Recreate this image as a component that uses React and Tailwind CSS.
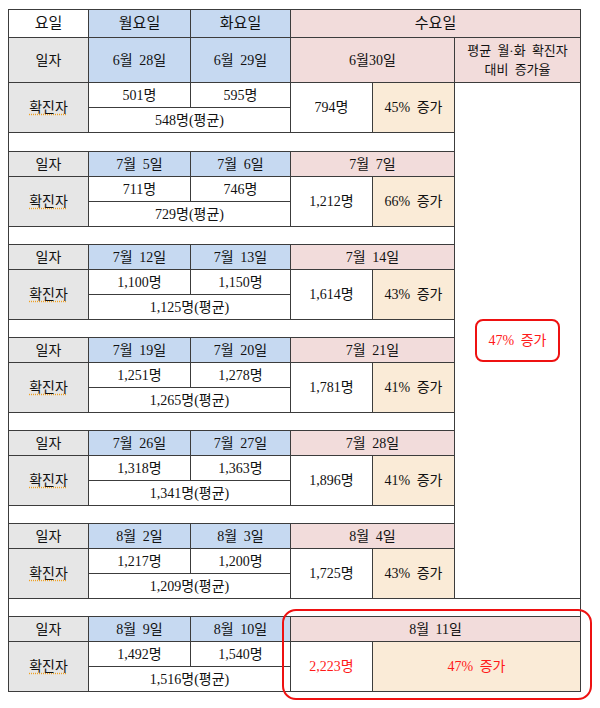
import React from 'react';

const blocks = [
  { d: ['7월 5일', '7월 6일', '7월 7일'], v: ['711명', '746명', '1,212명'], avg: '729명(평균)', pct: '66% 증가' },
  { d: ['7월 12일', '7월 13일', '7월 14일'], v: ['1,100명', '1,150명', '1,614명'], avg: '1,125명(평균)', pct: '43% 증가' },
  { d: ['7월 19일', '7월 20일', '7월 21일'], v: ['1,251명', '1,278명', '1,781명'], avg: '1,265명(평균)', pct: '41% 증가' },
  { d: ['7월 26일', '7월 27일', '7월 28일'], v: ['1,318명', '1,363명', '1,896명'], avg: '1,341명(평균)', pct: '41% 증가' },
  { d: ['8월 2일', '8월 3일', '8월 4일'], v: ['1,217명', '1,200명', '1,725명'], avg: '1,209명(평균)', pct: '43% 증가' },
];

const cell = 'border border-[#3c3c3c] p-0 text-center align-middle';
const grey = 'bg-[#e6e6e6]';
const blue = 'bg-[#c6d9f1]';
const pink = 'bg-[#f2dcdb]';
const beige = 'bg-[#faebd7]';
const date = '[word-spacing:3px]';

const Confirmed = () => (
  <span className="underline decoration-dotted decoration-[#f0a020] underline-offset-2">확진자</span>
);

const Block = ({ b, last }) => (
  <>
    <tr className="h-[25px]">
      <td className={`${cell} ${grey}`}>일자</td>
      <td className={`${cell} ${blue} ${date}`}>{b.d[0]}</td>
      <td className={`${cell} ${blue} ${date}`}>{b.d[1]}</td>
      <td className={`${cell} ${pink} ${date}`} colSpan={2}>{b.d[2]}</td>
    </tr>
    <tr className="h-[25px]">
      <td className={`${cell} ${grey}`} rowSpan={2}><Confirmed /></td>
      <td className={cell}>{b.v[0]}</td>
      <td className={cell}>{b.v[1]}</td>
      <td className={`${cell} bg-white`} rowSpan={2}>{b.v[2]}</td>
      <td className={`${cell} ${beige} ${date}`} rowSpan={2}>{b.pct}</td>
    </tr>
    <tr className="h-[25px]">
      <td className={cell} colSpan={2}>{b.avg}</td>
    </tr>
    <tr className="h-[18px]">
      <td className={cell} colSpan={last ? 6 : 5}></td>
    </tr>
  </>
);

export default function App() {
  return (
    <div className="relative w-[600px] h-[708px] bg-white pl-2 pt-[9px] text-[14px] text-[#111]" style={{ fontFamily: "'Liberation Serif', 'Noto Sans CJK KR', serif" }}>
      <table className="table-fixed border-collapse w-[572px]">
        <colgroup>
          <col className="w-[80px]" />
          <col className="w-[102px]" />
          <col className="w-[100px]" />
          <col className="w-[82px]" />
          <col className="w-[82px]" />
          <col className="w-[126px]" />
        </colgroup>
        <tbody>
          <tr className="h-[28px] text-[15px]">
            <td className={`${cell} bg-white`}>요일</td>
            <td className={`${cell} ${blue}`}>월요일</td>
            <td className={`${cell} ${blue}`}>화요일</td>
            <td className={`${cell} ${pink}`} colSpan={3}>수요일</td>
          </tr>
          <tr className="h-[45px]">
            <td className={`${cell} ${grey}`}>일자</td>
            <td className={`${cell} ${blue} ${date}`}>6월 28일</td>
            <td className={`${cell} ${blue} ${date}`}>6월 29일</td>
            <td className={`${cell} ${pink}`} colSpan={2}>6월30일</td>
            <td className={`${cell} ${pink} text-[13px] leading-[19px] ${date}`}>평균 월·화 확진자<br />대비 증가율</td>
          </tr>
          <tr className="h-[25px]">
            <td className={`${cell} ${grey}`} rowSpan={2}><Confirmed /></td>
            <td className={cell}>501명</td>
            <td className={cell}>595명</td>
            <td className={cell} rowSpan={2}>794명</td>
            <td className={`${cell} ${beige} ${date}`} rowSpan={2}>45% 증가</td>
            <td className={`${cell} bg-white`} rowSpan={22}>
              <span className={`inline-block border-2 border-[#ee1111] rounded-lg px-3 py-[9px] text-[#ff1a1a] ${date}`}>47% 증가</span>
            </td>
          </tr>
          <tr className="h-[25px]">
            <td className={cell} colSpan={2}>548명(평균)</td>
          </tr>
          <tr className="h-[19px]">
            <td className={cell} colSpan={5}></td>
          </tr>
          {blocks.map((b, i) => (
            <Block key={i} b={b} last={i === blocks.length - 1} />
          ))}
          <tr className="h-[25px]">
            <td className={`${cell} ${grey}`}>일자</td>
            <td className={`${cell} ${blue} ${date}`}>8월 9일</td>
            <td className={`${cell} ${blue} ${date}`}>8월 10일</td>
            <td className={`${cell} ${pink} ${date}`} colSpan={3}>8월 11일</td>
          </tr>
          <tr className="h-[25px]">
            <td className={`${cell} ${grey}`} rowSpan={2}><Confirmed /></td>
            <td className={cell}>1,492명</td>
            <td className={cell}>1,540명</td>
            <td className={`${cell} text-[#ff1a1a]`} rowSpan={2}>2,223명</td>
            <td className={`${cell} ${beige} text-[#ff1a1a] ${date}`} rowSpan={2} colSpan={2}>47% 증가</td>
          </tr>
          <tr className="h-[25px]">
            <td className={cell} colSpan={2}>1,516명(평균)</td>
          </tr>
        </tbody>
      </table>
      <div className="absolute left-[282px] top-[609px] w-[310px] h-[91px] border-2 border-[#ee1111] rounded-[14px] pointer-events-none" />
    </div>
  );
}
